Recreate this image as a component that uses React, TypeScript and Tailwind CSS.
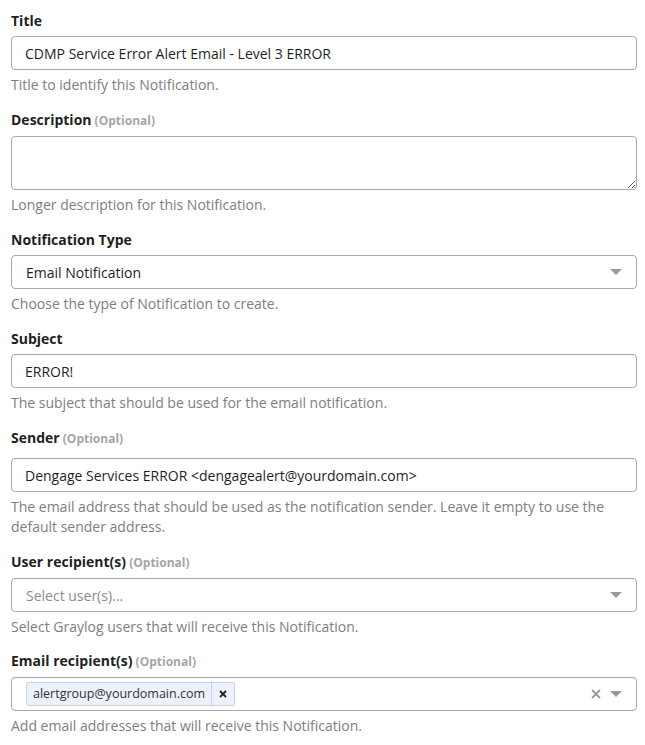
import React from "react";

const font = { fontFamily: '"Open Sans", "Noto Sans", sans-serif' };

const Label = ({ text, optional }: { text: string; optional?: boolean }) => (
  <label className="block text-[14px] leading-[20px] font-bold text-[#1f1f1f] mb-[5px]">
    {text}
    {optional && <span className="text-[12px] font-bold text-[#a6a6a6]"> (Optional)</span>}
  </label>
);

const Help = ({ children }: { children: React.ReactNode }) => (
  <p className="mt-[5px] text-[14px] leading-[20px] text-[#7e7e7e]">{children}</p>
);

const Caret = () => (
  <svg width="12" height="6" viewBox="0 0 12 6" className="shrink-0">
    <path d="M0 0 L12 0 L6 6 Z" fill="#999999" />
  </svg>
);

const inputCls =
  "block w-full h-[34px] px-[13px] border border-[#a8a8a8] rounded-[4px] text-[14px] text-[#1f1f1f] bg-white outline-none";

export default function App() {
  return (
    <div className="bg-white min-h-screen pt-[11px] pl-[11px] pr-[8px]" style={font}>
      <div className="mb-[15px]">
        <Label text="Title" />
        <input className={inputCls} defaultValue="CDMP Service Error Alert Email - Level 3 ERROR" />
        <Help>Title to identify this Notification.</Help>
      </div>

      <div className="mb-[15px]">
        <Label text="Description" optional />
        <textarea className="block w-full h-[54px] px-[13px] py-[6px] border border-[#a8a8a8] rounded-[4px] text-[14px] bg-white outline-none" />
        <Help>Longer description for this Notification.</Help>
      </div>

      <div className="mb-[15px]">
        <Label text="Notification Type" />
        <div className="flex items-center h-[34px] pl-[14px] pr-[14px] border border-[#a8a8a8] rounded-[4px]">
          <span className="flex-1 text-[14px] text-[#1f1f1f]">Email Notification</span>
          <Caret />
        </div>
        <Help>Choose the type of Notification to create.</Help>
      </div>

      <div className="mb-[15px]">
        <Label text="Subject" />
        <input className={inputCls} defaultValue="ERROR!" />
        <Help>The subject that should be used for the email notification.</Help>
      </div>

      <div className="mb-[15px]">
        <Label text="Sender" optional />
        <input className={`${inputCls} mt-[9px]`} defaultValue="Dengage Services ERROR <dengagealert@yourdomain.com>" />
        <Help>
          The email address that should be used as the notification sender. Leave it empty to use the default sender
          address.
        </Help>
      </div>

      <div className="mb-[14px]">
        <Label text="User recipient(s)" optional />
        <div className="flex items-center h-[34px] pl-[14px] pr-[14px] border border-[#a8a8a8] rounded-[4px]">
          <span className="flex-1 text-[14px] text-[#8c8c8c]">Select user(s)...</span>
          <Caret />
        </div>
        <Help>Select Graylog users that will receive this Notification.</Help>
      </div>

      <div className="mb-[15px]">
        <Label text="Email recipient(s)" optional />
        <div className="flex items-center h-[34px] pl-[14px] pr-[14px] border border-[#a8a8a8] rounded-[4px]">
          <div className="flex-1 flex">
            <div className="flex items-stretch h-[24px] border border-[#c5d1ef] bg-[#edf1fb] rounded-[2px] text-[12.5px] text-[#333]">
              <span className="px-[6px] leading-[22px]">alertgroup@yourdomain.com</span>
              <span className="flex items-center px-[7px] border-l border-[#c5d1ef]">
                <svg width="8" height="8" viewBox="0 0 8 8">
                  <path d="M1 1 L7 7 M7 1 L1 7" stroke="#222" strokeWidth="1.8" />
                </svg>
              </span>
            </div>
          </div>
          <svg width="10" height="10" viewBox="0 0 10 10" className="mr-[9px]">
            <path d="M1 1 L9 9 M9 1 L1 9" stroke="#999999" strokeWidth="1.8" />
          </svg>
          <Caret />
        </div>
        <Help>Add email addresses that will receive this Notification.</Help>
      </div>
    </div>
  );
}
